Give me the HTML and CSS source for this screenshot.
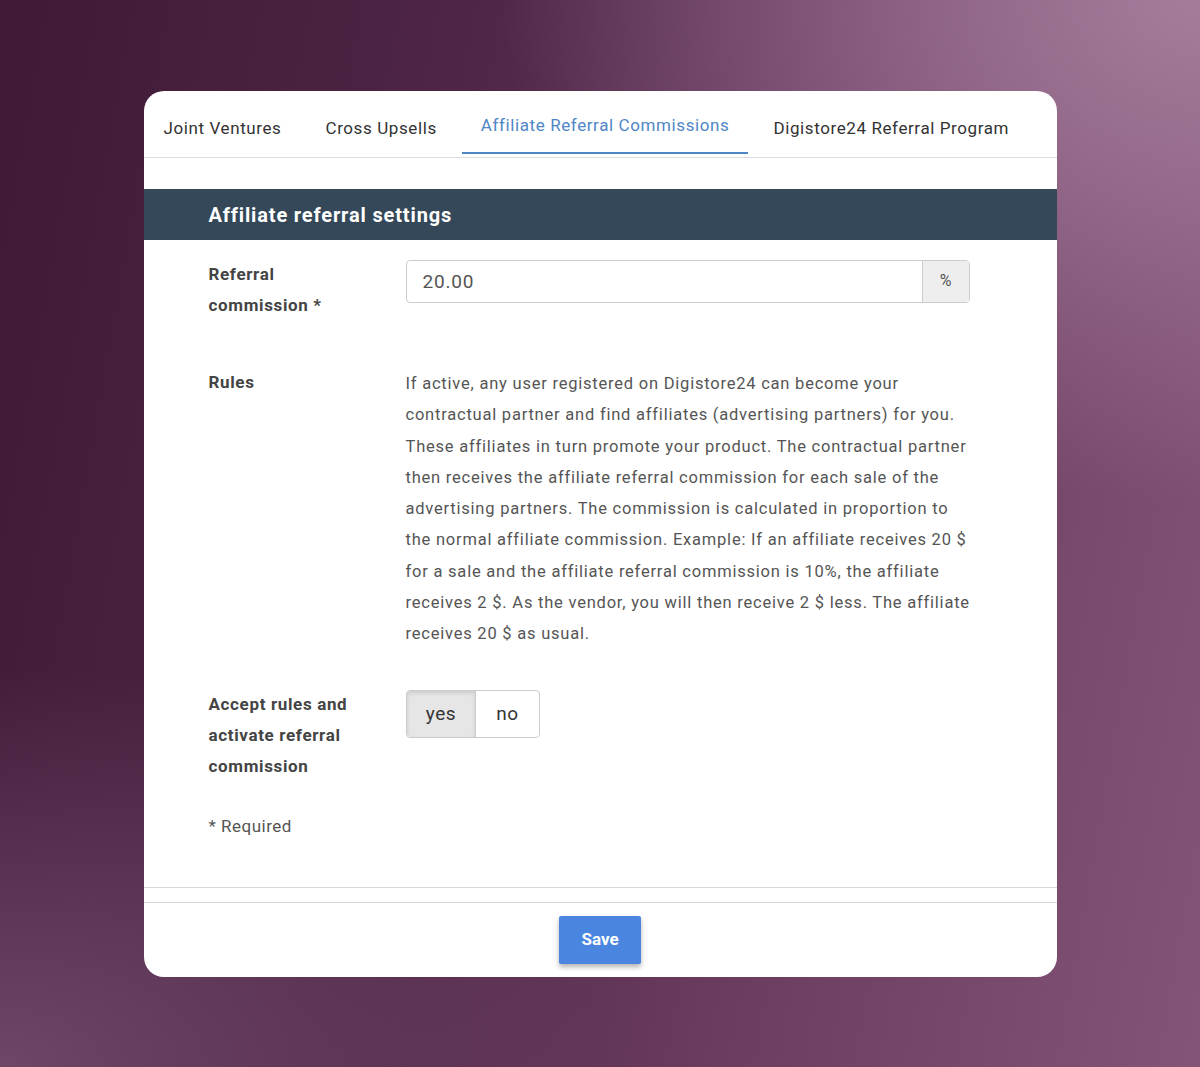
FILE: index.html
```html
<!DOCTYPE html>
<html lang="en">
<head>
  <meta charset="UTF-8">
  <title>Affiliate Referral Commissions</title>
  <link rel="stylesheet" href="styles.css">
</head>
<body>
<div class="card">
  <div class="tabs">
    <div class="tab">Joint Ventures</div>
    <div class="tab">Cross Upsells</div>
    <div class="tab active">Affiliate Referral Commissions</div>
    <div class="tab">Digistore24 Referral Program</div>
  </div>

  <div class="section-head">Affiliate referral settings</div>

  <div class="form">
    <div class="row row-commission">
      <div class="label">Referral commission *</div>
      <div class="input-group">
        <div class="input">20.00</div>
        <div class="addon">%</div>
      </div>
    </div>

    <div class="row row-rules">
      <div class="label">Rules</div>
      <p class="rules">If active, any user registered on Digistore24 can become your<br>
        contractual partner and find affiliates (advertising partners) for you.<br>
        These affiliates in turn promote your product. The contractual partner<br>
        then receives the affiliate referral commission for each sale of the<br>
        advertising partners. The commission is calculated in proportion to<br>
        the normal affiliate commission. Example: If an affiliate receives 20 $<br>
        for a sale and the affiliate referral commission is 10%, the affiliate<br>
        receives 2 $. As the vendor, you will then receive 2 $ less. The affiliate<br>
        receives 20 $ as usual.</p>
    </div>

    <div class="row row-accept">
      <div class="label">Accept rules and activate referral commission</div>
      <div class="toggle">
        <div class="opt selected">yes</div>
        <div class="opt">no</div>
      </div>
    </div>

    <div class="required">* Required</div>
  </div>

  <div class="spacer"></div>

  <div class="footer">
    <button class="btn-save">Save</button>
  </div>
</div>
</body>
</html>
```

FILE: styles.css
```css
body {
  margin: 0;
  min-height: 1067px;
  font-family: Roboto, "Liberation Sans", sans-serif;
  background:
    radial-gradient(ellipse 700px 500px at 1200px 0px, rgba(170,130,160,0.9), rgba(170,130,160,0) 100%),
    radial-gradient(ellipse 600px 400px at 0px 1067px, rgba(120,80,115,0.8), rgba(120,80,115,0) 100%),
    linear-gradient(100deg, #3e1a36 0%, #4f2646 35%, #6a3c60 65%, #845478 100%);
  display: flex;
  justify-content: center;
  align-items: flex-start;
}
.card {
  margin-top: 91px;
  width: 913px;
  height: 886px;
  background: #fff;
  border-radius: 20px;
  overflow: hidden;
  display: flex;
  flex-direction: column;
}
.tabs {
  display: flex;
  height: 66px;
  padding-left: 1px;
  border-bottom: 1px solid #dcdcdc;
  gap: 6px;
}
.tab {
  padding: 0 19px;
  font-size: 17px;
  letter-spacing: 0.6px;
  color: #333;
  display: flex;
  align-items: center;
  padding-top: 10px;
  box-sizing: border-box;
  border-bottom: 2px solid transparent;
}
.tab.active {
  color: #4f86c6;
  border-bottom-color: #4f86c6;
  padding-top: 7px;
  margin-bottom: 3px;
}
.section-head {
  margin-top: 31px;
  height: 51px;
  background: #344859;
  color: #fff;
  font-weight: bold;
  font-size: 20px;
  letter-spacing: 0.85px;
  padding-left: 65px;
  display: flex;
  align-items: center;
}
.form {
  padding: 20px 0 0 65px;
}
.row {
  display: grid;
  grid-template-columns: 197px 600px;
}
.label {
  font-weight: bold;
  font-size: 17px;
  letter-spacing: 0.65px;
  line-height: 31px;
  color: #444;
  width: 160px;
  margin-top: -1px;
}
.row-commission {
  height: 108px;
}
.input-group {
  display: flex;
  width: 564px;
  height: 43px;
  border: 1px solid #ccc;
  border-radius: 4px;
  box-sizing: border-box;
}
.input {
  flex: 1;
  font-size: 19px;
  letter-spacing: 0.8px;
  color: #555;
  padding-left: 16px;
  display: flex;
  align-items: center;
}
.addon {
  width: 47px;
  background: #eee;
  border-left: 1px solid #ccc;
  color: #555;
  font-size: 16px;
  display: flex;
  align-items: center;
  justify-content: center;
  padding-bottom: 3px;
  box-sizing: border-box;
}
.rules {
  margin: 0;
  font-size: 16.5px;
  letter-spacing: 0.78px;
  line-height: 31.3px;
  color: #555;
  white-space: nowrap;
}
.row-rules {
  height: 322px;
}
.toggle {
  display: flex;
  width: 134px;
  height: 48px;
  border: 1px solid #ccc;
  border-radius: 4px;
  overflow: hidden;
  box-sizing: border-box;
}
.opt {
  width: 63px;
  font-size: 19px;
  letter-spacing: 0.5px;
  color: #333;
  display: flex;
  align-items: center;
  justify-content: center;
  padding-bottom: 2px;
  box-sizing: border-box;
}
.opt.selected {
  width: 71px;
  background: #e6e6e6;
  border-right: 1px solid #ccc;
  box-shadow: inset 0 2px 4px rgba(0,0,0,0.12);
}
.row-accept {
  height: 121px;
}
.required {
  font-size: 17px;
  letter-spacing: 0.5px;
  color: #555;
  line-height: 31px;
}
.spacer {
  margin-top: 45px;
  height: 14px;
  border-top: 1px solid #d8d8d8;
  border-bottom: 1px solid #d8d8d8;
}
.footer {
  display: flex;
  justify-content: center;
  padding-top: 13px;
}
.btn-save {
  width: 82px;
  height: 48px;
  background: #4a86e0;
  color: #fff;
  font-family: Roboto, "Liberation Sans", sans-serif;
  font-weight: bold;
  font-size: 17px;
  border: none;
  border-radius: 2px;
  box-shadow: 0 3px 5px rgba(0,0,0,0.3);
  padding-bottom: 4px;
}
```
